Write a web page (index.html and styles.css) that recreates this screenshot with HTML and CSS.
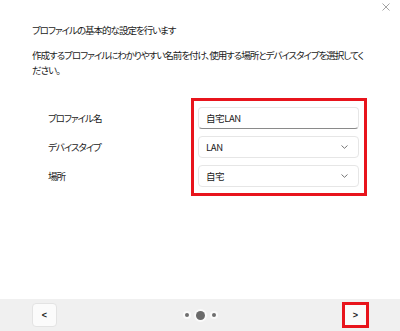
FILE: index.html
```html
<!DOCTYPE html>
<html lang="ja">
<head>
<meta charset="utf-8">
<link rel="stylesheet" href="styles.css">
</head>
<body>
<div class="page">
  <main class="main">
    <div class="topbar">
      <svg class="close" width="8" height="8" viewBox="0 0 8 8"><path d="M0.5 0.5 L7.5 7.5 M7.5 0.5 L0.5 7.5" stroke="#9a9a9a" stroke-width="0.9" fill="none"/></svg>
    </div>
    <h1 class="title">プロファイルの基本的な設定を行います</h1>
    <p class="desc">作成するプロファイルにわかりやすい名前を付け、使用する場所とデバイスタイプを選択してください。</p>
    <div class="form">
      <div class="labels">
        <div class="label">プロファイル名</div>
        <div class="label">デバイスタイプ</div>
        <div class="label">場所</div>
      </div>
      <div class="highlight">
        <div class="field text">自宅LAN</div>
        <div class="field select"><span>LAN</span><svg width="7" height="4" viewBox="0 0 7 4"><path d="M0.5 0.5 L3.5 3.3 L6.5 0.5" stroke="#666" stroke-width="0.9" fill="none"/></svg></div>
        <div class="field select"><span>自宅</span><svg width="7" height="4" viewBox="0 0 7 4"><path d="M0.5 0.5 L3.5 3.3 L6.5 0.5" stroke="#666" stroke-width="0.9" fill="none"/></svg></div>
      </div>
    </div>
  </main>
  <footer class="footer">
    <div class="btn">&lt;</div>
    <div class="dots"><span class="dot"></span><span class="dot big"></span><span class="dot"></span></div>
    <div class="btn next">&gt;</div>
  </footer>
</div>
</body>
</html>
```
FILE: styles.css
```css
html, body {
  margin: 0;
  padding: 0;
  background: #ffffff;
}
body {
  font-family: "Noto Sans CJK JP", "Noto Sans", sans-serif;
  font-size: 9.5px;
  letter-spacing: -1px;
  color: #1a1a1a;
  font-feature-settings: "palt";
}
.page {
  width: 400px;
  height: 331px;
  display: flex;
  flex-direction: column;
}
.main {
  flex: 1;
  padding: 0 32px;
}
.topbar {
  height: 16px;
  display: flex;
  justify-content: flex-end;
  align-items: flex-start;
  margin-right: -22px;
}
.close {
  margin-top: 3px;
}
.title {
  margin: 7px 0 0;
  font-size: 9.5px;
  font-weight: normal;
  line-height: 15px;
}
.desc {
  margin: 10px 0 0;
  line-height: 15px;
}
.form {
  margin-top: 20px;
  display: flex;
}
.labels {
  width: 159px;
  padding: 9px 0 0 16px;
  box-sizing: border-box;
  display: flex;
  flex-direction: column;
  gap: 7px;
}
.label {
  height: 22px;
  line-height: 22px;
}
.highlight {
  width: 176px;
  box-sizing: border-box;
  border: 3px solid #e8141c;
  padding: 6px 5px 6px 4px;
  display: flex;
  flex-direction: column;
  gap: 7px;
}
.field {
  height: 22px;
  box-sizing: border-box;
  background: #fff;
  border: 1px solid #e6e6e6;
  border-radius: 4px;
  padding: 0 10px 0 7px;
  display: flex;
  align-items: center;
  justify-content: space-between;
  letter-spacing: -0.4px;
}
.field.text {
  border-bottom: 1px solid #8a8a8a;
}
.footer {
  height: 32px;
  background: #f0f0f0;
  padding: 0 32px;
  display: flex;
  align-items: center;
  justify-content: space-between;
}
.btn {
  width: 25px;
  height: 24px;
  box-sizing: border-box;
  background: #fbfbfb;
  border: 1px solid #e3e3e3;
  border-radius: 4px;
  display: flex;
  align-items: center;
  justify-content: center;
  font-family: "Liberation Sans", sans-serif;
  font-size: 9px;
  letter-spacing: 0;
  font-weight: bold;
  color: #222;
}
.btn.next {
  outline: 3px solid #e8141c;
  outline-offset: -2px;
  border-radius: 0;
}
.dots {
  display: flex;
  align-items: center;
  gap: 7px;
}
.dot {
  width: 4px;
  height: 4px;
  border-radius: 50%;
  background: #6e6e6e;
  box-shadow: 0 0 0 2px #fafafa;
}
.dot.big {
  width: 9px;
  height: 9px;
  background: #6a6a6a;
}
```
